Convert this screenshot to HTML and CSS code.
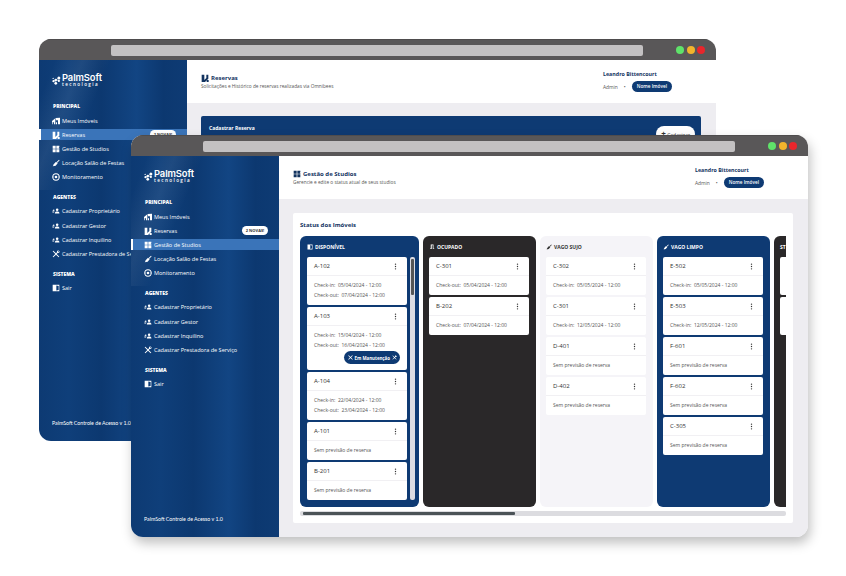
FILE: index.html
```html
<!DOCTYPE html>
<html lang="en">
<head>
    <meta charset="UTF-8">
    <meta name="viewport" content="width=device-width, initial-scale=1.0">
    <title>PalmSoft</title>
    <link rel="stylesheet" href="styles.css">
</head>
<body>
    <svg class="defs" width="0" height="0" aria-hidden="true">
        <symbol id="i-logo" viewBox="0 0 16 14">
            <circle cx="11" cy="3" r="2.4"/><circle cx="6" cy="6" r="2"/><circle cx="2.4" cy="8" r="1.8"/>
            <circle cx="11" cy="7.6" r="1.7"/><circle cx="6" cy="11.4" r="2.2"/><circle cx="1.8" cy="3.6" r="1"/>
            <path d="M6 6 11 3M6 6 11 7.6M6 6 6 11.4M6 6 2.4 8" stroke="#fff" stroke-width=".8"/>
        </symbol>
        <symbol id="i-home" viewBox="0 0 12 12">
            <path d="M0 6 5 2v9H3V8H1v3H0zM5.500 1.500 12 1v10H6V8h1.500v3H9V5H6z"/>
        </symbol>
        <symbol id="i-book" viewBox="0 0 12 12">
            <path d="M1 1h4v8l3-3V1h3v6L6 12H1z"/><path d="M8.500 9h3v3h-3z"/>
        </symbol>
        <symbol id="i-grid" viewBox="0 0 12 12">
            <path d="M1 1h4.500v4.500H1zM6.500 1H11v2l-1 .5 1 .5v1.500H6.500zM1 6.500h4.500V11H1zM6.500 6.500H11V11H6.500z"/>
        </symbol>
        <symbol id="i-broom" viewBox="0 0 12 12">
            <path d="M7 4.500 10.500 1l1 1L8 5.500zM6 4l2.500 2.500L5.500 10 1 11l1.500-1.500-1 .2L2.500 8z"/>
        </symbol>
        <symbol id="i-radar" viewBox="0 0 12 12">
            <path fill-rule="evenodd" d="M6 .5a5.500 5.500 0 1 0 0 11 5.500 5.500 0 0 0 0-11zm0 1.400a4.100 4.100 0 1 1 0 8.200 4.100 4.100 0 0 1 0-8.200z"/>
            <circle cx="6" cy="6" r="2"/><path d="M0 5.500h3v1H0zM9 5.500h3v1H9z"/>
        </symbol>
        <symbol id="i-users" viewBox="0 0 14 10">
            <circle cx="9" cy="2.800" r="2.200"/><path d="M5 9.500c0-2.500 1.500-3.500 4-3.500s4 1 4 3.500z"/>
            <circle cx="3" cy="3.600" r="1.400"/><path d="M0 4.500h1.500v1H0zM.500 7.800c0-1.300 1-2 2.500-2 .6 0 1 .1 1.400.3-.5.5-.8 1-.9 1.700z"/>
        </symbol>
        <symbol id="i-tools" viewBox="0 0 12 12">
            <path d="M1 2 2 1l4 4 1.500-1.500a2.500 2.500 0 0 1 3-3L9 2l1 1 1.500-1.500a2.500 2.500 0 0 1-3 3L7 6l4 4-1 1-4-4-4 4-1-1 4-4z"/>
        </symbol>
        <symbol id="i-door" viewBox="0 0 12 12">
            <path fill-rule="evenodd" d="M1 1h10v10H1zm5.500 1.200v7.600L10 9V3z"/>
        </symbol>
        <symbol id="i-x" viewBox="0 0 10 10">
            <path d="M1.500.5 5 4 8.500.5l1 1L6 5l3.500 3.500-1 1L5 6 1.500 9.500l-1-1L4 5 .5 1.500z"/>
        </symbol>
        <symbol id="i-more" viewBox="0 0 4 12">
            <circle cx="2" cy="2" r="1.200"/><circle cx="2" cy="6" r="1.200"/><circle cx="2" cy="10" r="1.200"/>
        </symbol>
        <symbol id="i-key" viewBox="0 0 12 12">
            <path d="M2 10V9h1.500V1H9v8h1.500v1H7.500V2.500h-2V10z"/>
        </symbol>
    </svg>

    <!-- janela de tras -->
    <article class="window window-back">
        <div class="titlebar">
            <span class="address"></span>
            <span class="dot dot-green"></span>
            <span class="dot dot-yellow"></span>
            <span class="dot dot-red"></span>
        </div>
        <div class="app">
            <aside class="sidebar">
                <div class="logo">
                    <svg class="logo-mark"><use href="#i-logo"/></svg>
                    <div>
                        <div class="logo-name">PalmSoft</div>
                        <div class="logo-sub">tecnologia</div>
                    </div>
                </div>
                <h4 class="nav-title">PRINCIPAL</h4>
                <a class="nav-item"><svg><use href="#i-home"/></svg>Meus Imóveis</a>
                <a class="nav-item active"><svg><use href="#i-book"/></svg>Reservas<span class="badge">2 NOVAS!</span></a>
                <a class="nav-item"><svg><use href="#i-grid"/></svg>Gestão de Studios</a>
                <a class="nav-item"><svg><use href="#i-broom"/></svg>Locação Salão de Festas</a>
                <a class="nav-item"><svg><use href="#i-radar"/></svg>Monitoramento</a>
                <h4 class="nav-title nav-gap">AGENTES</h4>
                <a class="nav-item"><svg><use href="#i-users"/></svg>Cadastrar Proprietário</a>
                <a class="nav-item"><svg><use href="#i-users"/></svg>Cadastrar Gestor</a>
                <a class="nav-item"><svg><use href="#i-users"/></svg>Cadastrar Inquilino</a>
                <a class="nav-item"><svg><use href="#i-tools"/></svg>Cadastrar Prestadora de Serviço</a>
                <h4 class="nav-title nav-gap">SISTEMA</h4>
                <a class="nav-item"><svg><use href="#i-door"/></svg>Sair</a>
                <div class="sidebar-footer">PalmSoft Controle de Acesso v 1.0</div>
            </aside>
            <main class="content">
                <header class="topbar">
                    <div>
                        <h1 class="page-title"><svg><use href="#i-book"/></svg>Reservas</h1>
                        <p class="page-sub">Solicitações e Histórico de reservas realizadas via Omnibees</p>
                    </div>
                    <div class="user">
                        <div class="user-name">Leandro Bittencourt</div>
                        <div class="user-meta">Admin <span class="sep">•</span> <span class="pill">Nome Imóvel</span></div>
                    </div>
                </header>
                <div class="body-back">
                    <section class="reserve-card">
                        <span class="reserve-title">Cadastrar Reserva</span>
                        <span class="collapse-btn"><b>+</b> Cadastrar</span>
                    </section>
                </div>
            </main>
        </div>
    </article>

    <!-- janela da frente -->
    <article class="window window-front">
        <div class="titlebar">
            <span class="address"></span>
            <span class="dot dot-green"></span>
            <span class="dot dot-yellow"></span>
            <span class="dot dot-red"></span>
        </div>
        <div class="app">
            <aside class="sidebar">
                <div class="logo">
                    <svg class="logo-mark"><use href="#i-logo"/></svg>
                    <div>
                        <div class="logo-name">PalmSoft</div>
                        <div class="logo-sub">tecnologia</div>
                    </div>
                </div>
                <h4 class="nav-title">PRINCIPAL</h4>
                <a class="nav-item"><svg><use href="#i-home"/></svg>Meus Imóveis</a>
                <a class="nav-item"><svg><use href="#i-book"/></svg>Reservas<span class="badge">2 NOVAS!</span></a>
                <a class="nav-item active"><svg><use href="#i-grid"/></svg>Gestão de Studios</a>
                <a class="nav-item"><svg><use href="#i-broom"/></svg>Locação Salão de Festas</a>
                <a class="nav-item"><svg><use href="#i-radar"/></svg>Monitoramento</a>
                <h4 class="nav-title nav-gap">AGENTES</h4>
                <a class="nav-item"><svg><use href="#i-users"/></svg>Cadastrar Proprietário</a>
                <a class="nav-item"><svg><use href="#i-users"/></svg>Cadastrar Gestor</a>
                <a class="nav-item"><svg><use href="#i-users"/></svg>Cadastrar Inquilino</a>
                <a class="nav-item"><svg><use href="#i-tools"/></svg>Cadastrar Prestadora de Serviço</a>
                <h4 class="nav-title nav-gap">SISTEMA</h4>
                <a class="nav-item"><svg><use href="#i-door"/></svg>Sair</a>
                <div class="sidebar-footer">PalmSoft Controle de Acesso v 1.0</div>
            </aside>
            <main class="content">
                <header class="topbar">
                    <div>
                        <h1 class="page-title"><svg><use href="#i-grid"/></svg>Gestão de Studios</h1>
                        <p class="page-sub">Gerencie e edite o status atual de seus studios</p>
                    </div>
                    <div class="user">
                        <div class="user-name">Leandro Bittencourt</div>
                        <div class="user-meta">Admin <span class="sep">•</span> <span class="pill">Nome Imóvel</span></div>
                    </div>
                </header>
                <div class="body-front">
                    <section class="panel">
                        <h2 class="panel-title">Status dos Imóveis</h2>
                        <div class="board">
                            <div class="column col-blue col-scroll">
                                <div class="col-head"><svg><use href="#i-door"/></svg>DISPONÍVEL</div>
                                <div class="col-inner">
                                    <div class="cards">
                                        <div class="card">
                                            <div class="card-head">A-102<svg><use href="#i-more"/></svg></div>
                                            <div class="card-body">
                                                <p>Check-in:&nbsp; 05/04/2024 - 12:00</p>
                                                <p>Check-out:&nbsp; 07/04/2024 - 12:00</p>
                                            </div>
                                        </div>
                                        <div class="card">
                                            <div class="card-head">A-103<svg><use href="#i-more"/></svg></div>
                                            <div class="card-body">
                                                <p>Check-in:&nbsp; 15/04/2024 - 12:00</p>
                                                <p>Check-out:&nbsp; 16/04/2024 - 12:00</p>
                                                <span class="maint"><svg><use href="#i-x"/></svg>Em Manutenção<svg><use href="#i-tools"/></svg></span>
                                            </div>
                                        </div>
                                        <div class="card">
                                            <div class="card-head">A-104<svg><use href="#i-more"/></svg></div>
                                            <div class="card-body">
                                                <p>Check-in:&nbsp; 22/04/2024 - 12:00</p>
                                                <p>Check-out:&nbsp; 23/04/2024 - 12:00</p>
                                            </div>
                                        </div>
                                        <div class="card">
                                            <div class="card-head">A-101<svg><use href="#i-more"/></svg></div>
                                            <div class="card-body"><p>Sem previsão de reserva</p></div>
                                        </div>
                                        <div class="card">
                                            <div class="card-head">B-201<svg><use href="#i-more"/></svg></div>
                                            <div class="card-body"><p>Sem previsão de reserva</p></div>
                                        </div>
                                    </div>
                                    <div class="v-track"><span class="v-thumb"></span></div>
                                </div>
                            </div>
                            <div class="column col-dark">
                                <div class="col-head"><svg><use href="#i-key"/></svg>OCUPADO</div>
                                <div class="cards">
                                    <div class="card">
                                        <div class="card-head">C-301<svg><use href="#i-more"/></svg></div>
                                        <div class="card-body"><p>Check-out:&nbsp; 05/04/2024 - 12:00</p></div>
                                    </div>
                                    <div class="card">
                                        <div class="card-head">B-202<svg><use href="#i-more"/></svg></div>
                                        <div class="card-body"><p>Check-out:&nbsp; 07/04/2024 - 12:00</p></div>
                                    </div>
                                </div>
                            </div>
                            <div class="column col-light">
                                <div class="col-head"><svg><use href="#i-broom"/></svg>VAGO SUJO</div>
                                <div class="cards">
                                    <div class="card">
                                        <div class="card-head">C-302<svg><use href="#i-more"/></svg></div>
                                        <div class="card-body"><p>Check-in:&nbsp; 05/05/2024 - 12:00</p></div>
                                    </div>
                                    <div class="card">
                                        <div class="card-head">C-301<svg><use href="#i-more"/></svg></div>
                                        <div class="card-body"><p>Check-in:&nbsp; 12/05/2024 - 12:00</p></div>
                                    </div>
                                    <div class="card">
                                        <div class="card-head">D-401<svg><use href="#i-more"/></svg></div>
                                        <div class="card-body"><p>Sem previsão de reserva</p></div>
                                    </div>
                                    <div class="card">
                                        <div class="card-head">D-402<svg><use href="#i-more"/></svg></div>
                                        <div class="card-body"><p>Sem previsão de reserva</p></div>
                                    </div>
                                </div>
                            </div>
                            <div class="column col-blue">
                                <div class="col-head"><svg><use href="#i-broom"/></svg>VAGO LIMPO</div>
                                <div class="cards">
                                    <div class="card">
                                        <div class="card-head">E-502<svg><use href="#i-more"/></svg></div>
                                        <div class="card-body"><p>Check-in:&nbsp; 05/05/2024 - 12:00</p></div>
                                    </div>
                                    <div class="card">
                                        <div class="card-head">E-503<svg><use href="#i-more"/></svg></div>
                                        <div class="card-body"><p>Check-in:&nbsp; 12/05/2024 - 12:00</p></div>
                                    </div>
                                    <div class="card">
                                        <div class="card-head">F-601<svg><use href="#i-more"/></svg></div>
                                        <div class="card-body"><p>Sem previsão de reserva</p></div>
                                    </div>
                                    <div class="card">
                                        <div class="card-head">F-602<svg><use href="#i-more"/></svg></div>
                                        <div class="card-body"><p>Sem previsão de reserva</p></div>
                                    </div>
                                    <div class="card">
                                        <div class="card-head">C-305<svg><use href="#i-more"/></svg></div>
                                        <div class="card-body"><p>Sem previsão de reserva</p></div>
                                    </div>
                                </div>
                            </div>
                            <div class="column col-dark col-last">
                                <div class="col-head">ST</div>
                                <div class="cards">
                                    <div class="card card-blank"></div>
                                    <div class="card card-blank"></div>
                                </div>
                            </div>
                        </div>
                        <div class="h-track"><span class="h-thumb"></span></div>
                    </section>
                </div>
            </main>
        </div>
    </article>
</body>
</html>
```

FILE: styles.css
```css
* {
    margin: 0;
    padding: 0;
    box-sizing: border-box;
}

body {
    width: 846px;
    height: 576px;
    position: relative;
    overflow: hidden;
    background: #fff;
    font-family: 'Open Sans', sans-serif;
}

.defs {
    position: absolute;
}

/* janelas */
.window {
    position: absolute;
    width: 677px;
    height: 402px;
    display: flex;
    flex-direction: column;
    border-radius: 12px;
    overflow: hidden;
    background: #fff;
}

.window-back {
    left: 39px;
    top: 39px;
}

.window-front {
    left: 131px;
    top: 135px;
    box-shadow: 2px 6px 12px rgba(0, 0, 0, 0.25);
}

.titlebar {
    height: 21px;
    flex: none;
    display: flex;
    align-items: center;
    padding-left: 72px;
    background: #595758;
    border-top: 1px solid #4e4c4d;
}

.address {
    width: 532px;
    height: 11px;
    flex: none;
    margin-right: 33px;
    background: #c3c1c2;
    border-radius: 2px;
}

.dot {
    width: 8px;
    height: 8px;
    flex: none;
    margin-right: 2.5px;
    border-radius: 50%;
}

.dot-green { background: #5fe36a; }
.dot-yellow { background: #f2b42c; }
.dot-red { background: #e8262c; }

.app {
    flex: 1;
    min-height: 0;
    display: flex;
}

/* menu lateral */
.sidebar {
    width: 148px;
    flex: none;
    display: flex;
    flex-direction: column;
    color: #fff;
    background:
        linear-gradient(112deg, rgba(255, 255, 255, 0) 8%, rgba(255, 255, 255, 0.07) 22%, rgba(255, 255, 255, 0) 36%) no-repeat 0 0 / 100% 130px,
        linear-gradient(90deg, #0d3a73 0%, #0f3f7a 20%, #0c3870 42%, #124583 66%, #0c3870 84%, #0e3b74 100%);
}

.logo {
    height: 42px;
    padding: 14px 0 0 13px;
    display: flex;
    align-items: flex-start;
    gap: 0;
}

.logo-mark {
    width: 10px;
    height: 11px;
    margin-top: 1px;
    fill: #fff;
}

.logo-name {
    font-family: 'Inter', sans-serif;
    font-size: 9.4px;
    line-height: 8px;
    font-weight: 600;
    letter-spacing: -0.1px;
}

.logo-sub {
    font-size: 4.6px;
    line-height: 5px;
    font-weight: 600;
    letter-spacing: 1.4px;
}

.nav-title {
    height: 8px;
    margin: 0 0 5px 13px;
    padding-left: 1px;
    font-size: 5px;
    line-height: 8px;
    font-weight: 800;
}

.nav-gap {
    margin-top: 7px;
}

.nav-item {
    height: 11px;
    margin-bottom: 3.2px;
    padding-left: 13px;
    position: relative;
    display: flex;
    align-items: center;
    font-size: 5.55px;
    white-space: nowrap;
}

.nav-item svg {
    width: 8px;
    height: 8px;
    margin-right: 2px;
    flex: none;
    fill: #fff;
}

.nav-item.active {
    background: #3a74b9;
    border-left: 2px solid #fff;
    padding-left: 11px;
}

.badge {
    position: absolute;
    right: 11px;
    top: 1px;
    width: 26px;
    height: 9px;
    border-radius: 5px;
    background: #fff;
    color: #333;
    font-size: 4px;
    font-weight: 700;
    line-height: 9px;
    text-align: center;
}

.sidebar-footer {
    margin-top: auto;
    padding: 0 0 14px 13px;
    font-family: 'Lato', sans-serif;
    font-size: 5.25px;
    line-height: 7px;
}

/* topo */
.content {
    flex: 1;
    min-width: 0;
    display: flex;
    flex-direction: column;
    background: #eeedf1;
}

.topbar {
    height: 43px;
    flex: none;
    display: flex;
    justify-content: space-between;
    padding: 13px 44px 0 14px;
    background: #fff;
}

.page-title {
    display: flex;
    align-items: center;
    height: 9px;
    font-size: 6px;
    font-weight: 700;
    color: #12335f;
}

.page-title svg {
    width: 8px;
    height: 8px;
    margin-right: 2px;
    fill: #12335f;
}

.page-sub {
    font-size: 4.75px;
    line-height: 8px;
    color: #555;
}

.user {
    width: 69px;
    margin-top: -3px;
}

.user-name {
    height: 9px;
    font-size: 5.3px;
    line-height: 9px;
    font-weight: 700;
    color: #12335f;
}

.user-meta {
    margin-top: 2px;
    display: flex;
    align-items: center;
    font-size: 4.9px;
    color: #555;
}

.sep {
    margin: 0 6px;
    font-size: 5px;
}

.pill {
    height: 11px;
    padding: 0 5px;
    border-radius: 6px;
    background: #0e3a73;
    color: #fff;
    font-size: 4.7px;
    font-weight: 600;
    line-height: 11px;
    white-space: nowrap;
}

/* conteudo da janela de tras */
.body-back {
    flex: 1;
    padding: 13px 15px 0 14px;
}

.reserve-card {
    height: 60px;
    padding: 8px 6px 0 8px;
    display: flex;
    justify-content: space-between;
    align-items: flex-start;
    background: #0e3a73;
    border-radius: 2px;
    color: #fff;
    font-size: 5px;
}

.reserve-title {
    font-weight: 700;
    line-height: 8px;
}

.collapse-btn {
    height: 16px;
    margin-top: 2px;
    padding: 0 5px;
    border-radius: 8px;
    background: #fff;
    color: #333;
    line-height: 15px;
}

.collapse-btn b {
    font-size: 8px;
    font-weight: 700;
}

/* quadro de status */
.body-front {
    flex: 1;
    min-height: 0;
    padding: 14px 15px 14px 14px;
}

.panel {
    height: 100%;
    padding: 7px 7px 0 7px;
    background: #fff;
    border-radius: 2px;
}

.panel-title {
    height: 11px;
    margin-bottom: 5px;
    font-size: 6px;
    line-height: 11px;
    font-weight: 700;
    color: #12335f;
}

.board {
    height: 271px;
    display: flex;
    gap: 4px;
    overflow: hidden;
}

.column {
    width: 113px;
    flex: none;
    padding: 0 7px 0 6px;
    border-radius: 6px;
}

.col-scroll {
    width: 119px;
    padding: 0 4px 0 7px;
}

.col-blue {
    background: #0e3a73;
    color: #fff;
}

.col-dark {
    background: #2a2829;
    color: #fff;
}

.col-light {
    background: #f5f4f8;
    color: #333;
}

.col-head {
    height: 21px;
    display: flex;
    align-items: center;
    font-size: 5px;
    font-weight: 700;
    white-space: nowrap;
}

.col-head svg {
    width: 6px;
    height: 6px;
    margin-right: 2px;
    fill: currentColor;
}

.col-inner {
    display: flex;
    gap: 3px;
}

.cards {
    width: 100px;
    display: flex;
    flex-direction: column;
    gap: 2px;
}

.card {
    background: #fff;
    border-radius: 2px;
    color: #333;
}

.card-blank {
    height: 38px;
}

.card-head {
    height: 19px;
    display: flex;
    justify-content: space-between;
    align-items: center;
    padding: 0 10px 0 7px;
    border-bottom: 1px solid #f1f0f3;
    font-size: 6px;
}

.card-head svg {
    width: 3px;
    height: 7px;
    fill: #333;
}

.card-body {
    display: flex;
    flex-direction: column;
    padding: 4px 7px 5px;
}

.card-body p {
    height: 10px;
    font-size: 5px;
    line-height: 10px;
    color: #555;
    white-space: nowrap;
}

.maint {
    align-self: flex-end;
    height: 13px;
    margin: 1px 0 1px 0;
    padding: 0 3px 0 4px;
    display: flex;
    align-items: center;
    gap: 2px;
    border-radius: 7px;
    background: #0e3a73;
    color: #fff;
    font-size: 4.4px;
    font-weight: 700;
    white-space: nowrap;
}

.maint svg {
    width: 5px;
    height: 5px;
    fill: #fff;
}

.v-track {
    width: 5px;
    padding: 2px 1px;
    background: #dcdce2;
    border-radius: 2px;
}

.v-thumb {
    display: block;
    height: 36px;
    background: #555;
    border-radius: 1px;
}

.h-track {
    height: 5px;
    margin-top: 4px;
    padding: 1px 3px;
    background: #dcdce0;
    border-radius: 2px;
}

.h-thumb {
    display: block;
    width: 212px;
    height: 3px;
    background: #4b5357;
    border-radius: 1px;
}
```
